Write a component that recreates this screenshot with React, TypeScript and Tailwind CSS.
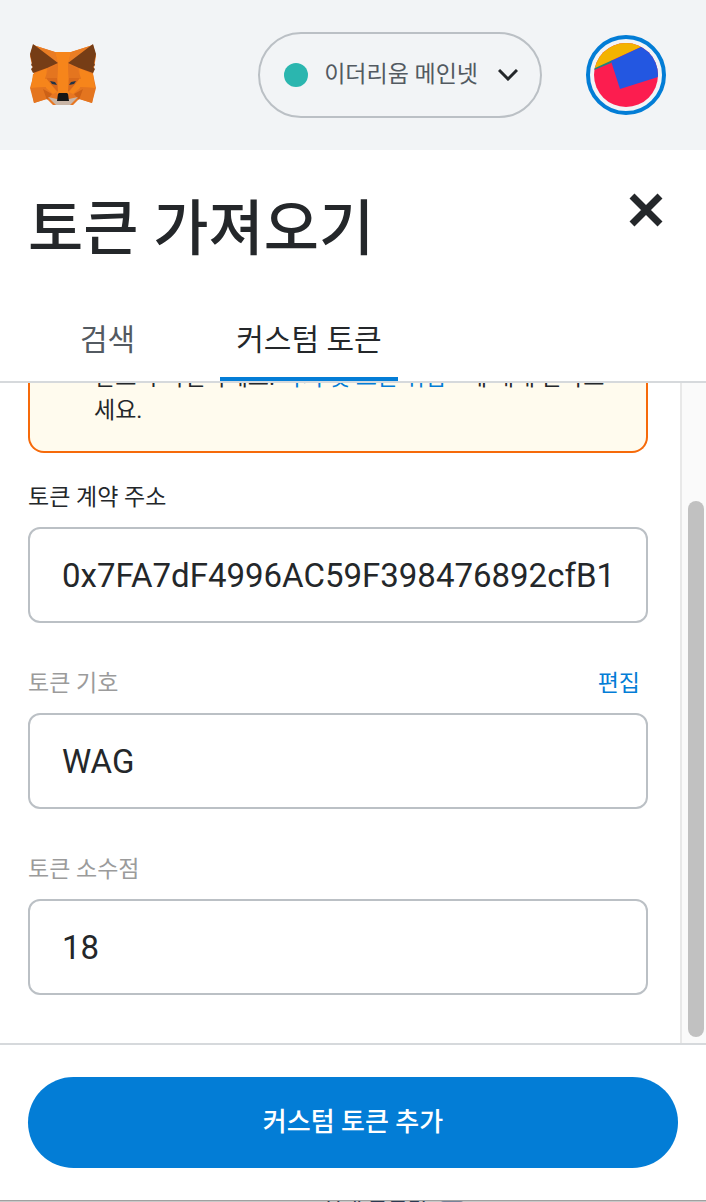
import React from 'react';

const fields = [
  { id: 'address', label: '토큰 계약 주소', value: '0x7FA7dF4996AC59F398476892cfB1', muted: false, editable: false },
  { id: 'symbol', label: '토큰 기호', value: 'WAG', muted: true, editable: true },
  { id: 'decimals', label: '토큰 소수점', value: '18', muted: true, editable: false },
];

function Fox() {
  return (
    <svg viewBox="0 0 66 62" className="h-[62px] w-[66px]" role="img" aria-label="MetaMask">
      <path d="M3 1 25 8h16L63 1l3 11-3 18 3 14-4 15-13-4-6 6H23l-6-6-13 4-4-15 4-14L0 12Z" fill="#e87722" />
      <path d="M25 8h16l-3 12 1 30H27l1-30Z" fill="#f6851b" />
      <path d="M3 1 25 8l3 12ZM63 1 41 8l-3 12Z" fill="#ea7d24" />
      <path d="M3 30 17 24l-1 10 3 9-18 1ZM63 30l-14-6 1 10-3 9 18 1Z" fill="#f6851b" />
      <path d="m1 44 15-1 3 11-15 5ZM65 44l-15-1-3 11 15 5Z" fill="#e4751f" />
      <path d="m13 45 9 5-5 6ZM53 45l-9 5 5 6Z" fill="#cd6116" />
      <path d="m15 34 4-9 9-5-1 14ZM51 34l-4-9-9-5 1 14Z" fill="#e4751f" />
      <path d="m15 34 12 0 1 14ZM51 34l-12 0-1 14Z" fill="#d8691b" />
      <path d="m16 34 11 14-4 2-7-6ZM50 34 39 48l4 2 7-6Z" fill="#f6851b" />
      <path d="m20 37 5 1 2 3-5-1ZM46 37l-5 1-2 3 5-1Z" fill="#233447" />
      <path d="M3 0 28 19 17 24 3 29 1 25l2-2-2-2 1-2-2-9ZM63 0 38 19l11 5 14 5 2-4-2-2 2-2-1-2 2-9Z" fill="#763d16" />
      <path d="m18 53 9 2h12l9-2-8 8H26Z" fill="#c9b5a6" />
      <path d="m28 50 1-1h8l1 1 1 7H27Z" fill="#161616" />
    </svg>
  );
}

function Avatar() {
  return (
    <svg viewBox="0 0 64 64" className="size-16 rounded-full" aria-hidden="true">
      <rect width="64" height="64" fill="#fc1d4f" />
      <path d="M0 24 20 15 17 20 0 27Z" fill="#1c8581" />
      <path d="M0 0h64L47 4 0 25.500Z" fill="#f3b300" />
      <path d="M17 18 64-4v38L26 46Z" fill="#2357e1" />
    </svg>
  );
}

export default function App() {
  return (
    <div className="flex min-h-screen flex-col bg-white font-[Roboto,'Noto_Sans_CJK_KR',sans-serif] text-[#24272a]">
      <header className="flex h-[150px] items-center bg-[#f2f4f6] pr-10 pl-[30px]">
        <Fox />
        <button type="button" className="mr-11 ml-auto flex h-[86px] items-center rounded-full border-2 border-[#bbc0c5] pr-[22px] pl-6 text-[23px] text-[#535a61]">
          <span className="mr-4 size-6 rounded-full bg-[#2bb6af]" />
          이더리움 메인넷
          <svg viewBox="0 0 20 12" className="ml-5 h-3 w-5" fill="none" stroke="#24272a" strokeWidth="3" aria-hidden="true">
            <path d="m1 1 9 9 9-9" />
          </svg>
        </button>
        <button type="button" aria-label="계정" className="flex size-20 items-center justify-center rounded-full border-4 border-[#037dd6]">
          <Avatar />
        </button>
      </header>

      <main className="flex flex-col">
        <div className="flex items-start justify-between pt-10 pr-[43px] pl-7">
          <h1 className="text-[60px] leading-[80px] font-medium">토큰 가져오기</h1>
          <button type="button" aria-label="닫기" className="mt-[3px]">
            <svg viewBox="0 0 34 34" className="size-[34px]" fill="none" stroke="#24272a" strokeWidth="7" aria-hidden="true">
              <path d="m3 3 28 28M31 3 3 31" />
            </svg>
          </button>
        </div>

        <div role="tablist" className="mt-7 flex border-b-2 border-[#d6d9dc] pl-16 text-[30px] leading-10">
          <button type="button" role="tab" aria-selected="false" className="mr-[69px] h-[83px] border-b-4 border-transparent px-4 pt-1 text-[#535a61]">검색</button>
          <button type="button" role="tab" aria-selected="true" className="h-[83px] border-b-4 border-[#037dd6] px-4 pt-1">커스텀 토큰</button>
        </div>

        <div className="flex">
          <div className="min-w-0 flex-1 pr-8 pb-12 pl-7">
            <div className="flex h-[70px] flex-col justify-end overflow-hidden rounded-b-2xl border-2 border-t-0 border-[#f66a0a] bg-[#fffbee] pr-8 pb-6 pl-16 text-[23px] leading-[33px]">
              <p className="break-all">
                반드시 확인하세요. <a href="#risks" className="mr-5 text-[#037dd6]">사기 및 보안 위험</a>에 대해 알아보세요.
              </p>
            </div>
            <div className="flex flex-col gap-11 pt-7">
              {fields.map((f) => (
                <div key={f.id}>
                  <div className="flex items-center justify-between pr-2 text-[23px] leading-[34px]">
                    <label htmlFor={f.id} className={f.muted ? 'text-[#9b9b9b]' : ''}>{f.label}</label>
                    {f.editable && <button type="button" className="text-[#037dd6]">편집</button>}
                  </div>
                  <input id={f.id} defaultValue={f.value} className="mt-3 block h-24 w-full rounded-xl border-2 border-[#bbc0c5] px-8 text-[33px] outline-none" />
                </div>
              ))}
            </div>
          </div>
          <div className="flex w-[26px] items-end border-l-2 border-[#e8e8e8] bg-[#fafafa] pb-[6px] pl-[6px]" aria-hidden="true">
            <div className="h-[536px] w-4 rounded-full bg-[#c1c1c1]" />
          </div>
        </div>
      </main>

      <footer className="border-t-2 border-[#d6d9dc] px-7 py-8">
        <button type="button" className="h-[91px] w-full rounded-full bg-[#037dd6] text-[26px] font-medium text-white">커스텀 토큰 추가</button>
      </footer>

      <div className="flex h-[2px] items-start justify-center gap-3 overflow-hidden border-t border-[#a0a0a0] bg-[#c8c8c8] pl-20 text-[22px] leading-5 text-[#2c3a52]">
        <span>현재 공급량</span>
        <span className="size-6 rounded bg-[#77839a]" />
      </div>
    </div>
  );
}
